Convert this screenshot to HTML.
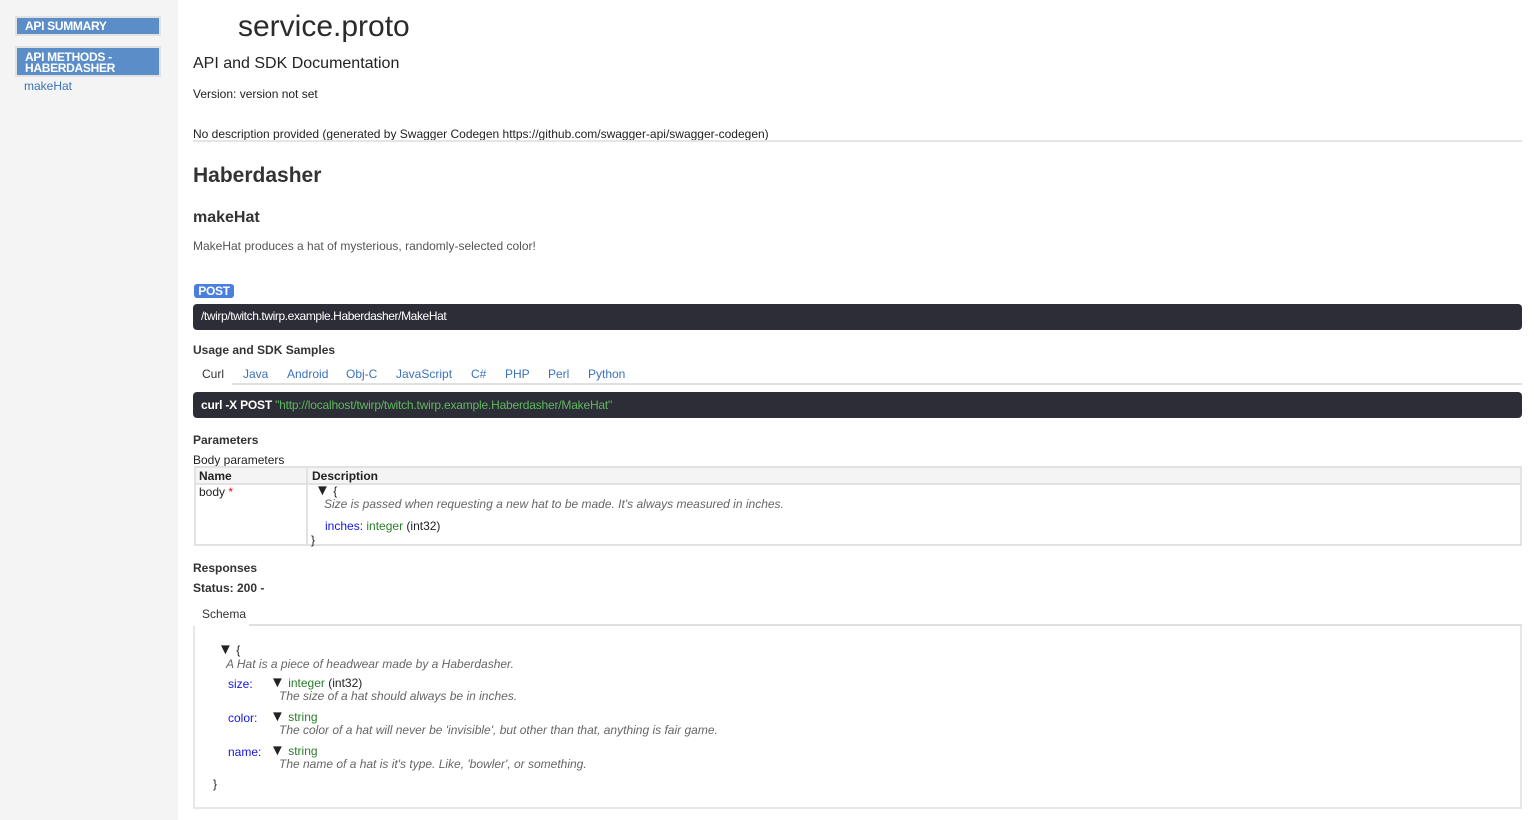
<!DOCTYPE html>
<html><head><style>
*{margin:0;padding:0;box-sizing:border-box}
body{width:1534px;height:820px;background:#fff;font-family:"Liberation Sans",sans-serif;color:#222;position:relative;overflow:hidden;font-size:12px}
.a{position:absolute;white-space:nowrap}
#side{position:absolute;left:0;top:0;width:178px;height:820px;background:#f4f4f4}
.nb{position:absolute;left:15px;width:146px;background:#5b8ec9;border:2px solid #e2e2e2;color:#fff;font-weight:bold;font-size:12px;line-height:11px;padding:3px 0 2px 8px;letter-spacing:-0.3px}
.dark{position:absolute;left:193px;width:1329px;background:#2d2d37;border-radius:4px;color:#fff;font-size:12px;padding-left:8px;letter-spacing:-0.4px}
.bl{color:#1515e8}.gr{color:#2a7d2a}.it{font-style:italic;color:#666}
.tab{color:#3a73b9}
.tr{font-size:15px;line-height:12px}
</style></head><body>
<div id="side">
<div class="nb" style="top:16px;height:20px">API SUMMARY</div>
<div class="nb" style="top:46px;height:31px;padding-top:4px">API METHODS -<br>HABERDASHER</div>
<div class="a" style="left:24px;top:79px;color:#3a73b9;font-size:12px">makeHat</div>
</div>
<div class="a" style="left:238px;top:10px;font-size:30px;color:#2b2b2b">service.proto</div>
<div class="a" style="left:193px;top:55px;font-size:16px">API and SDK Documentation</div>
<div class="a" style="left:193px;top:87px">Version: version not set</div>
<div class="a" style="left:193px;top:127px">No description provided (generated by Swagger Codegen https://github.com/swagger-api/swagger-codegen)</div>
<div class="a" style="left:193px;top:140px;width:1329px;height:2px;background:#e5e5e5"></div>
<div class="a" style="left:193px;top:164px;font-size:21px;font-weight:bold;color:#333">Haberdasher</div>
<div class="a" style="left:193px;top:209px;font-size:16px;font-weight:bold;color:#333">makeHat</div>
<div class="a" style="left:193px;top:239px;color:#555">MakeHat produces a hat of mysterious, randomly-selected color!</div>
<div class="a" style="left:194px;top:284px;width:40px;height:14px;background:#4a7fe0;border-radius:3px;color:#fff;font-weight:bold;font-size:12px;line-height:14px;text-align:center;letter-spacing:-0.3px">POST</div>
<div class="dark" style="top:304px;height:26px;line-height:25px">/twirp/twitch.twirp.example.Haberdasher/MakeHat</div>
<div class="a" style="left:193px;top:343px;font-weight:bold;color:#333">Usage and SDK Samples</div>
<div class="a" style="left:232px;top:383px;width:1290px;height:2px;background:#e0e0e0"></div>
<div class="a" style="left:202px;top:367px;color:#333">Curl</div>
<div class="a tab" style="left:243px;top:367px">Java</div>
<div class="a tab" style="left:287px;top:367px">Android</div>
<div class="a tab" style="left:346px;top:367px">Obj-C</div>
<div class="a tab" style="left:396px;top:367px">JavaScript</div>
<div class="a tab" style="left:471px;top:367px">C#</div>
<div class="a tab" style="left:505px;top:367px">PHP</div>
<div class="a tab" style="left:548px;top:367px">Perl</div>
<div class="a tab" style="left:588px;top:367px">Python</div>
<div class="dark" style="top:392px;height:26px;line-height:26px;letter-spacing:-0.2px"><b>curl -X POST</b> <span style="color:#5fb85f">"http://localhost/twirp/twitch.twirp.example.Haberdasher/MakeHat"</span></div>
<div class="a" style="left:193px;top:433px;font-weight:bold;color:#333">Parameters</div>
<div class="a" style="left:193px;top:453px">Body parameters</div>
<div class="a" style="left:194px;top:466px;width:1328px;height:80px;border:2px solid #e2e2e2"></div>
<div class="a" style="left:196px;top:468px;width:1324px;height:17px;background:#f4f4f4;border-bottom:2px solid #e2e2e2"></div>
<div class="a" style="left:306px;top:468px;width:2px;height:76px;background:#e2e2e2"></div>
<div class="a" style="left:199px;top:469px;font-weight:bold">Name</div>
<div class="a" style="left:312px;top:469px;font-weight:bold">Description</div>
<div class="a" style="left:199px;top:485px">body <span style="color:red">*</span></div>
<div class="a" style="left:315px;top:484px"><span class="tr">▼</span> {</div>
<div class="a it" style="left:324px;top:497px">Size is passed when requesting a new hat to be made. It's always measured in inches.</div>
<div class="a" style="left:325px;top:519px"><span class="bl">inches:</span> <span class="gr">integer</span> (int32)</div>
<div class="a" style="left:311px;top:533px">}</div>
<div class="a" style="left:193px;top:561px;font-weight:bold;color:#333">Responses</div>
<div class="a" style="left:193px;top:581px;font-weight:bold;color:#333">Status: 200 -</div>
<div class="a" style="left:202px;top:607px;color:#333">Schema</div>
<div class="a" style="left:249px;top:624px;width:1273px;height:2px;background:#e0e0e0"></div>
<div class="a" style="left:193px;top:626px;width:1329px;height:183px;border:2px solid #e8e8e8;border-top:none"></div>
<div class="a" style="left:218px;top:643px"><span class="tr">▼</span> {</div>
<div class="a it" style="left:226px;top:657px">A Hat is a piece of headwear made by a Haberdasher.</div>
<div class="a bl" style="left:228px;top:677px">size:</div>
<div class="a" style="left:270px;top:676px"><span class="tr">▼</span> <span class="gr">integer</span> (int32)</div>
<div class="a it" style="left:279px;top:689px">The size of a hat should always be in inches.</div>
<div class="a bl" style="left:228px;top:711px">color:</div>
<div class="a" style="left:270px;top:710px"><span class="tr">▼</span> <span class="gr">string</span></div>
<div class="a it" style="left:279px;top:723px">The color of a hat will never be 'invisible', but other than that, anything is fair game.</div>
<div class="a bl" style="left:228px;top:745px">name:</div>
<div class="a" style="left:270px;top:744px"><span class="tr">▼</span> <span class="gr">string</span></div>
<div class="a it" style="left:279px;top:757px">The name of a hat is it's type. Like, 'bowler', or something.</div>
<div class="a" style="left:213px;top:777px">}</div>
</body></html>
